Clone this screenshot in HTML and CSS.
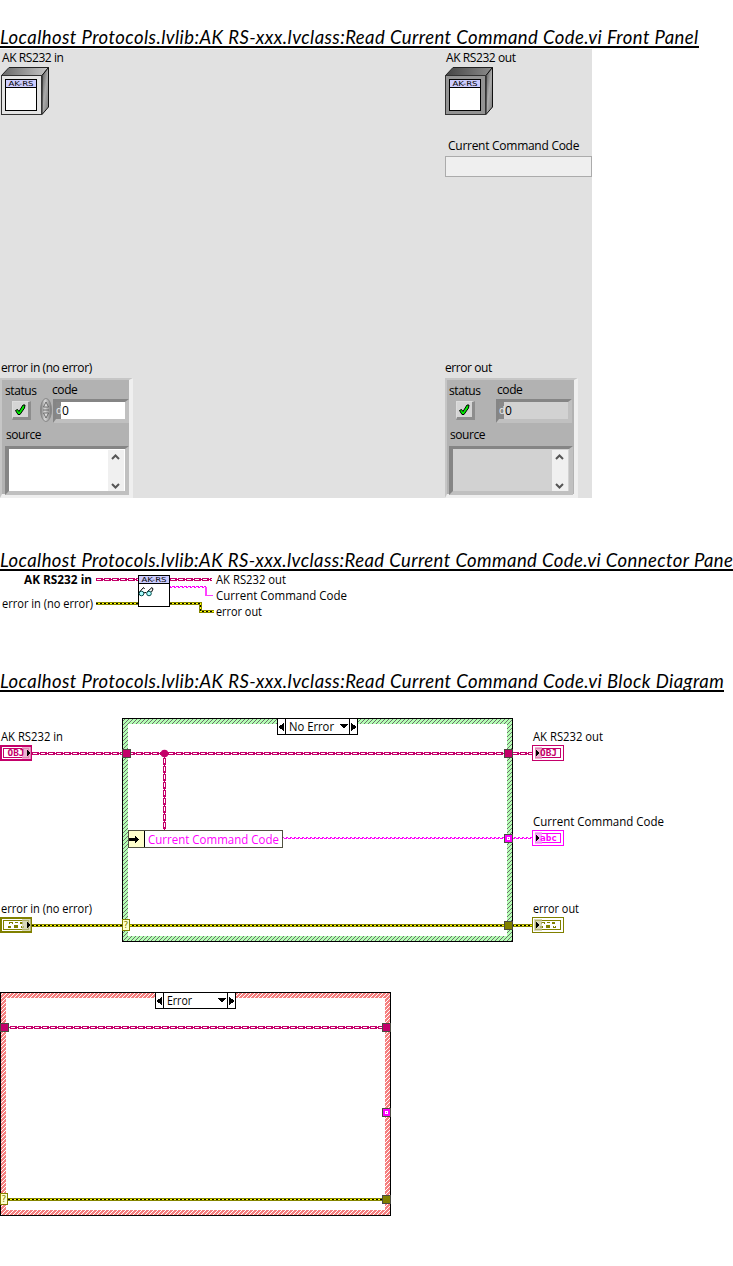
FILE: index.html
```html
<!DOCTYPE html>
<html lang="en">
<head>
<meta charset="utf-8">
<title>Read Current Command Code.vi</title>
<link rel="stylesheet" href="styles.css">
</head>
<body>
<svg class="defs" width="0" height="0" aria-hidden="true">
  <defs>
    <linearGradient id="side" x1="0" y1="0" x2="1" y2="1"><stop offset="0" stop-color="#555"/><stop offset=".5" stop-color="#aaa"/><stop offset="1" stop-color="#777"/></linearGradient>
    <linearGradient id="roof" x1="0" y1="0" x2="1" y2="0"><stop offset="0" stop-color="#666"/><stop offset="1" stop-color="#c8c8c8"/></linearGradient>
    <linearGradient id="roofDark" x1="0" y1="0" x2="1" y2="0"><stop offset="0" stop-color="#444"/><stop offset="1" stop-color="#8c8c8c"/></linearGradient>
    <linearGradient id="knob" x1="0" y1="0" x2="1" y2="0"><stop offset="0" stop-color="#777"/><stop offset=".4" stop-color="#d8d8d8"/><stop offset="1" stop-color="#777"/></linearGradient>
    <pattern id="green" width="4" height="4" patternUnits="userSpaceOnUse"><rect width="4" height="4" fill="#b4ffb4"/><path d="M3 0h1v1h-1zM2 1h1v1h-1zM1 2h1v1h-1zM0 3h1v1h-1z" fill="#6c6c6c"/></pattern>
    <pattern id="red" width="4" height="4" patternUnits="userSpaceOnUse"><rect width="4" height="4" fill="#f58080"/><path d="M3 0h1v1h-1zM2 1h1v1h-1zM1 2h1v1h-1zM0 3h1v1h-1z" fill="#fff"/></pattern>
    <pattern id="string" width="4" height="2" patternUnits="userSpaceOnUse"><path d="M0 0h3v1h-3zM2 1h2v1h-2z" fill="#f0f"/></pattern>
    <g id="screen">
      <rect x=".5" y=".5" width="31" height="31" fill="#fff" stroke="#000"/>
      <rect x="1" y="1" width="30" height="7" fill="#ccf"/>
      <path d="M1 8.500h30" stroke="#000"/>
      <text class="tiny" x="3.500" y="7" textLength="25" lengthAdjust="spacingAndGlyphs">AK-RS</text>
    </g>
    <g id="selector">
      <rect x=".5" y=".5" width="80" height="16" fill="#fff" stroke="#000"/>
      <path d="M8.500 0v17M72.500 0v17" stroke="#000"/>
      <path d="M7 5v8l-6-4zM74 5v8l6-4zM63 6h8l-4 4.500z"/>
    </g>
    <g id="objTunnel"><rect x=".5" y=".5" width="8" height="8" fill="#c4006a" stroke="#4a4a40"/></g>
    <g id="strTunnel"><rect x=".5" y=".5" width="8" height="8" fill="#f0f" stroke="#4a4a40"/><rect x="3.500" y="3.500" width="2" height="2" fill="#f0f" stroke="#fff"/></g>
    <g id="errTunnel"><rect x=".5" y=".5" width="8" height="8" fill="#808000" stroke="#4a4a40"/></g>
    <g id="caseInput"><rect x=".5" y=".5" width="7" height="11" fill="#ffc" stroke="#808000"/><text class="query" x="1.600" y="9.300">?</text></g>
    <g id="errBits" fill="#808000"><path d="M9 5h4v2h-4zM15 5h3v1h-3zM20 5h3v2h-3zM8 9h3v2h-3zM14 8h4v3h-4zM21 9h3v2h-3z"/><path d="M10 6h2v1h-2zM22 9h1v1h-1z" fill="#fff"/></g>
  </defs>
</svg>

<h2 class="title title-panel">Localhost Protocols.lvlib:AK RS-xxx.lvclass:Read Current Command Code.vi Front Panel</h2>
<main class="front-panel">
  <section class="column">
    <div class="label first">AK RS232 in</div>
    <svg class="cube" width="49" height="48" viewBox="0 67 49 48">
      <path d="M1.500 75.500L9 67.500H48.500L42 75.500z" fill="url(#roof)" stroke="#222"/>
      <path d="M42 75.500L48.500 67.500V107L42 114.500z" fill="url(#side)" stroke="#111"/>
      <rect x="1.500" y="75.500" width="40" height="39" fill="#e4e4e4" stroke="#333"/>
      <use href="#screen" x="5" y="79"/>
    </svg>
    <div class="label error-label">error in (no error)</div>
    <div class="cluster">
      <div class="row">
        <div class="status"><span class="label">status</span><span class="led"><svg width="15" height="15" viewBox="0 0 15 15"><path d="M2.500 8.500l2-1 1.500 2 4-6.500 2 0-.5 3-4.500 6.500-2 0z" fill="#0e0" stroke="#000"/></svg></span></div>
        <div class="code"><span class="label">code</span><div class="number">
          <svg width="13" height="24" viewBox="0 0 13 24"><ellipse cx="6" cy="12" rx="5.500" ry="11.500" fill="url(#knob)" stroke="#888"/><path d="M3 12h6M3.500 9l2.500-5 2.500 5zM3.500 15l2.500 5 2.500-5z" fill="#ddd" stroke="#555" stroke-width=".8"/></svg>
          <div class="field"><i>d</i><b>0</b></div></div></div>
      </div>
      <div class="label source-label">source</div>
      <div class="source"><div class="scroll"><svg width="16" height="40" viewBox="0 0 16 40"><path d="M4 9l3.500-3.500L11 9M4 34l3.500 3.500L11 34" fill="none" stroke="#555" stroke-width="2"/></svg></div></div>
    </div>
  </section>
  <section class="column">
    <div class="label first">AK RS232 out</div>
    <svg class="cube" width="49" height="48" viewBox="0 67 49 48">
      <path d="M1.500 75.500L9 67.500H48.500L42 75.500z" fill="url(#roofDark)" stroke="#222"/>
      <path d="M42 75.500L48.500 67.500V107L42 114.500z" fill="url(#side)" stroke="#111"/>
      <rect x="1.500" y="75.500" width="40" height="39" fill="#939393" stroke="#333"/>
      <use href="#screen" x="5" y="79"/>
    </svg>
    <div class="label command-label">Current Command Code</div>
    <div class="command"></div>
    <div class="label error-label">error out</div>
    <div class="cluster readonly">
      <div class="row">
        <div class="status"><span class="label">status</span><span class="led"><svg width="15" height="15" viewBox="0 0 15 15"><path d="M2.500 8.500l2-1 1.500 2 4-6.500 2 0-.5 3-4.500 6.500-2 0z" fill="#0e0" stroke="#000"/></svg></span></div>
        <div class="code"><span class="label">code</span><div class="number"><div class="field"><i>d</i><b>0</b></div></div></div>
      </div>
      <div class="label source-label">source</div>
      <div class="source"><div class="scroll"><svg width="16" height="40" viewBox="0 0 16 40"><path d="M4 9l3.500-3.500L11 9M4 34l3.500 3.500L11 34" fill="none" stroke="#555" stroke-width="2"/></svg></div></div>
    </div>
  </section>
</main>

<h2 class="title title-pane">Localhost Protocols.lvlib:AK RS-xxx.lvclass:Read Current Command Code.vi Connector Pane</h2>
<svg class="canvas" width="733" height="60" viewBox="0 571 733 60">
  <g class="obj"><path class="hull" d="M96 579.500H138M170 579.500H212"/><path class="core" d="M96 579.500H138M170 579.500H212"/><path class="gap" d="M97 579.500H138M171 579.500H212"/></g>
  <rect x="170" y="586" width="36" height="2" fill="url(#string)"/><path d="M205 587h2v9h-2zM207 595h6v1h-6z" fill="#f0f" opacity=".75"/>
  <g class="err"><path class="hull" d="M96 603.500H138M170 603.500H200.500V611.500H214"/><path class="core" d="M96 603.500H138M170 603.500H200.500V611.500H214"/><path class="dash" d="M96 603.500H138M170 603.500H200.500V611.500H214"/></g>
  <use href="#screen" x="138" y="575"/>
  <g class="glasses"><path d="M139.500 592l4-4.500 1 1.500M147 592l5-4.500 1 1.500-1.500 3M143.500 593.500q1.500-2 3-.5"/><circle cx="141.500" cy="593.500" r="2.300"/><circle cx="149" cy="593.500" r="2.300"/></g>
  <text class="bold" x="24" y="584" textLength="68" lengthAdjust="spacingAndGlyphs">AK RS232 in</text>
  <text x="2" y="608" textLength="91" lengthAdjust="spacingAndGlyphs">error in (no error)</text>
  <text x="216" y="584" textLength="70" lengthAdjust="spacingAndGlyphs">AK RS232 out</text>
  <text x="216" y="600" textLength="131" lengthAdjust="spacingAndGlyphs">Current Command Code</text>
  <text x="216" y="616" textLength="46" lengthAdjust="spacingAndGlyphs">error out</text>
</svg>

<h2 class="title title-diagram">Localhost Protocols.lvlib:AK RS-xxx.lvclass:Read Current Command Code.vi Block Diagram</h2>
<svg class="canvas" width="733" height="574" viewBox="0 692 733 574">
  <path d="M122 718H513V942H122z" fill="#000"/><path d="M123 719H512V941H123z" fill="url(#green)"/><path d="M128 724H507V936H128z" fill="#fff"/>
  <use href="#selector" x="277" y="718"/>
  <text x="289" y="731" textLength="45" lengthAdjust="spacingAndGlyphs">No Error</text>
  <g class="obj"><path class="hull" d="M32 753.500H532M164.500 758V830"/><path class="core" d="M32 753.500H532M164.500 754V830"/><path class="gap" d="M33 753.500H532M164.500 759V830"/></g>
  <circle cx="164.500" cy="753.500" r="3.800" fill="#c4006a"/>
  <rect x="283" y="837" width="249" height="2" fill="url(#string)"/>
  <g class="err"><path class="hull" d="M32 925.500H532"/><path class="core" d="M32 925.500H532"/><path class="dash" d="M32 925.500H532"/></g>
  <use href="#objTunnel" x="122" y="749"/><use href="#objTunnel" x="504" y="749"/>
  <use href="#strTunnel" x="504" y="834"/><use href="#errTunnel" x="504" y="921"/><use href="#caseInput" x="122" y="919"/>

  <rect x="128.500" y="830.500" width="154" height="17" fill="#fff" stroke="#505040"/>
  <path d="M129 831h15v16h-15z" fill="#ffc"/><path d="M144.500 831v16" stroke="#000"/>
  <path d="M129 838h6v-2l4 3.500-4 3.500v-2h-6z"/>
  <text class="magenta" x="148" y="844" textLength="131" lengthAdjust="spacingAndGlyphs">Current Command Code</text>

  <g transform="translate(0 745)"><rect x="1" y="1" width="30" height="14" fill="#fff" stroke="#c4006a" stroke-width="2"/><rect x="3.500" y="3.500" width="25" height="9" fill="none" stroke="#c4006a"/><path d="M22 2h9v12h-9z" fill="#e8a0c4" opacity=".8"/><text class="type" fill="#c4006a" x="7.500" y="11" textLength="17" lengthAdjust="spacingAndGlyphs">OBJ</text><path d="M27 5l4 3-4 3z"/></g>
  <g transform="translate(532 745)"><rect x=".5" y=".5" width="31" height="15" fill="#fff" stroke="#c4006a"/><rect x="3.500" y="3.500" width="25" height="9" fill="none" stroke="#c4006a"/><path d="M3 2h7v12h-7z" fill="#e8a0c4" opacity=".8"/><text class="type" fill="#c4006a" x="8" y="11" textLength="17" lengthAdjust="spacingAndGlyphs">OBJ</text><path d="M4 5l4 3-4 3z"/></g>
  <g transform="translate(532 830)"><rect x=".5" y=".5" width="31" height="15" fill="#fff" stroke="#f0f"/><rect x="3.500" y="3.500" width="25" height="9" fill="none" stroke="#f0f"/><path d="M3 2h7v12h-7z" fill="#f4a0f4" opacity=".8"/><text class="type" fill="#f0f" x="8" y="11" textLength="17" lengthAdjust="spacingAndGlyphs">abc</text><path d="M4 5l4 3-4 3z"/></g>
  <g transform="translate(0 917)"><rect x="1" y="1" width="30" height="14" fill="#fff" stroke="#808000" stroke-width="2"/><rect x="3.500" y="3.500" width="25" height="9" fill="none" stroke="#808000"/><use href="#errBits"/><path d="M22 2h9v12h-9z" fill="#c8c89c" opacity=".7"/><path d="M27 5l4 3-4 3z"/></g>
  <g transform="translate(532 917)"><rect x=".5" y=".5" width="31" height="15" fill="#fff" stroke="#808000"/><rect x="3.500" y="3.500" width="25" height="9" fill="none" stroke="#808000"/><use href="#errBits"/><path d="M2 2h8v12h-8z" fill="#c8c89c" opacity=".7"/><path d="M4 5l4 3-4 3z"/></g>

  <text x="1" y="741" textLength="62" lengthAdjust="spacingAndGlyphs">AK RS232 in</text>
  <text x="533" y="741" textLength="70" lengthAdjust="spacingAndGlyphs">AK RS232 out</text>
  <text x="533" y="826" textLength="131" lengthAdjust="spacingAndGlyphs">Current Command Code</text>
  <text x="1" y="913" textLength="91" lengthAdjust="spacingAndGlyphs">error in (no error)</text>
  <text x="533" y="913" textLength="46" lengthAdjust="spacingAndGlyphs">error out</text>

  <path d="M0 992H391V1216H0z" fill="#000"/><path d="M1 993H390V1215H1z" fill="url(#red)"/><path d="M6 998H385V1210H6z" fill="#fff"/>
  <use href="#selector" x="155" y="992"/>
  <text x="167" y="1005" textLength="25" lengthAdjust="spacingAndGlyphs">Error</text>
  <g class="obj"><path class="hull" d="M10 1027.500H382"/><path class="core" d="M9 1027.500H382"/><path class="gap" d="M11 1027.500H382"/></g>
  <g class="err"><path class="hull" d="M8 1199.500H382"/><path class="core" d="M8 1199.500H382"/><path class="dash" d="M8 1199.500H382"/></g>
  <use href="#objTunnel" x="0" y="1023"/><use href="#objTunnel" x="382" y="1023"/>
  <use href="#strTunnel" x="382" y="1108"/><use href="#errTunnel" x="382" y="1195"/><use href="#caseInput" x="0" y="1193"/>
</svg>
</body>
</html>
```
FILE: styles.css
```css
* { box-sizing: border-box; }
body { margin: 0; background: #fff; color: #000; font-family: "Open Sans", "Noto Sans", sans-serif; font-size: 12px; }
.defs { display: block; }
.title {
  margin: 0; height: 28px; overflow: hidden; white-space: nowrap;
  border-bottom: 2px solid #000; font: italic 400 18.5px/34px Lato, sans-serif; letter-spacing: 0.425px;
}
.title-panel { margin-top: 20px; width: 699px; }
.title-pane { margin-top: 45px; width: 733px; letter-spacing: 0.41px; }
.title-diagram { margin-top: 33px; width: 724px; }

.front-panel { display: grid; grid-template-columns: 444px 148px; width: 592px; height: 449px; margin-top: 1px; background: #e1e1e1; }
.column { display: flex; flex-direction: column; align-items: flex-start; height: 449px; }
.label { display: block; height: 16px; line-height: 16px; letter-spacing: -0.42px; white-space: nowrap; }
.first { margin: 1px 0 0 2px; }
.cube { display: block; margin-top: 1px; }
.command-label { margin: 23px 0 0 4px; letter-spacing: -0.27px; }
.command { width: 147px; height: 21px; margin: 2px 0 0 1px; background: #efefef; border: 1px solid #ababab; }
.error-label { margin: auto 0 2px 1px; }
.cluster {
  width: 133px; height: 120px; padding: 3px 0 0 3px; background: #b2b2b2;
  border: solid; border-width: 2px 4px 4px 2px; border-color: #c6c6c6 #efefef #efefef #c6c6c6;
}
.row { display: flex; height: 44px; }
.status { width: 35px; }
.led { display: grid; place-items: center; width: 19px; height: 19px; margin: 2px 0 0 7px; background: #d5d5d5; border: solid; border-width: 1px 3px 3px 1px; border-color: #ddd #8d8d8d #8d8d8d #ddd; }
.code { margin-top: -1px; }
.code .label { margin-left: 12px; }
.number { display: flex; }
.field { display: flex; width: 76px; height: 24px; margin-top: 1px; background: #fff; border: solid; border-width: 3px 4px 4px 3px; border-color: #858585 #c0c0c0 #c0c0c0 #858585; line-height: 17px; }
.field i { width: 5px; background: #888; color: #eee; font-size: 10px; font-style: normal; }
.field b { padding-left: 1px; font-weight: 400; }
.source-label { margin-left: 1px; }
.source { display: flex; justify-content: flex-end; width: 124px; height: 49px; margin-top: 3px; padding: 1px 1px 0 0; background: #fff; border: solid; border-width: 3px 4px 4px 4px; border-color: #858585 #c0c0c0 #c0c0c0 #858585; }
.scroll { width: 16px; height: 41px; background: #f0f0f0; }
.readonly { margin-left: 1px; padding-left: 2px; }
.readonly .field, .readonly .source { background: #d2d2d2; }
.readonly .code .label { margin-left: 13px; }
.readonly .number { padding-left: 12px; }

.canvas { display: block; font-size: 12px; shape-rendering: crispEdges; }
.canvas circle { shape-rendering: geometricPrecision; }
.glasses { shape-rendering: geometricPrecision; }
.glasses path { fill: none; stroke: #000; }
.glasses circle { fill: #aff; stroke: #004848; }
.bold { font-weight: 700; }
.magenta { fill: #f0f; }
.tiny { font: 400 6.8px "DejaVu Sans", sans-serif; }
.query { font: 9px "DejaVu Sans", sans-serif; fill: #808000; }
.type { font: 700 8px "DejaVu Sans Mono", monospace; }
.obj path, .err path { fill: none; }
.obj .hull { stroke: #c4006a; stroke-width: 3; stroke-dasharray: 7 1; }
.obj .core { stroke: #c4006a; stroke-width: 1; }
.obj .gap { stroke: #fff; stroke-width: 1; stroke-dasharray: 4 4; }
.err .hull { stroke: #858500; stroke-width: 3; }
.err .core { stroke: #ff0; stroke-width: 1; }
.err .dash { stroke: #000; stroke-width: 1; stroke-dasharray: 2 2; }
```
